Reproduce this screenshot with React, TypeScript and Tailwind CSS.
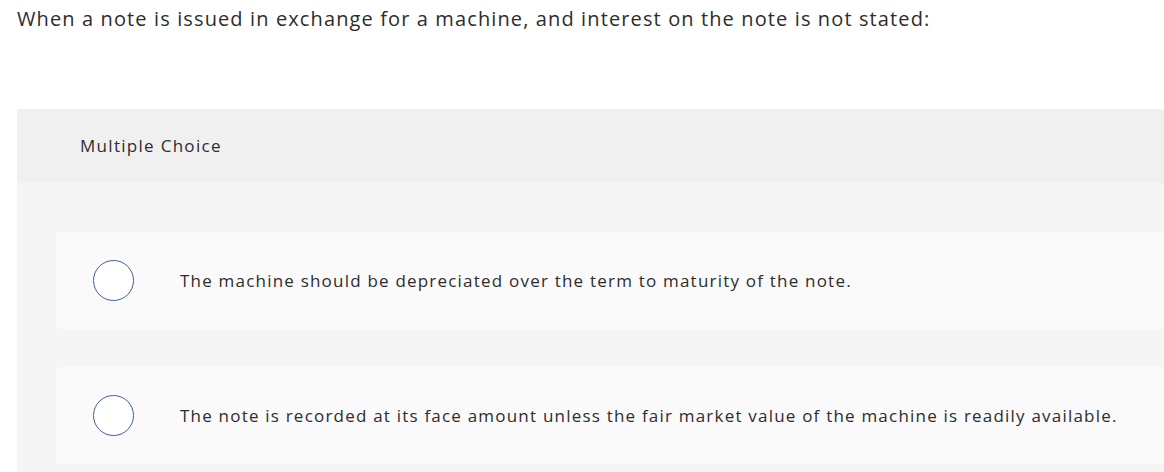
export default function App() {
  const options = [
    "The machine should be depreciated over the term to maturity of the note.",
    "The note is recorded at its face amount unless the fair market value of the machine is readily available.",
  ];

  return (
    <div className="w-[1164px] h-[472px] overflow-hidden bg-white text-[#333] font-['Open_Sans','Liberation_Sans',sans-serif]">
      <p className="pl-[17px] pt-[5px] text-[20px] leading-[28px] tracking-[0.056em] text-[#2d2d2d]">
        When a note is issued in exchange for a machine, and interest on the note is not stated:
      </p>
      <section className="ml-[17px] mt-[76px] rounded-tl-[3px] bg-[#f5f5f5]">
        <div className="h-[74px] flex items-center pl-[63px] bg-[#f0f0f0] rounded-tl-[3px] text-[17px] tracking-[0.076em] text-[#2d2d2d]">
          Multiple Choice
        </div>
        <div className="flex flex-col gap-[38px] pt-[49px] pb-[10px] pl-[39px]">
          {options.map((opt) => (
            <div
              key={opt}
              className="h-[97px] flex items-center bg-[#fafafa] rounded-l-[4px]"
            >
              <span className="ml-[37px] w-[41px] h-[41px] rounded-full border-[1.5px] border-[#3d5f94] bg-white shrink-0" />
              <span className="ml-[46px] text-[17px] tracking-[0.071em] text-[#2d2d2d]">{opt}</span>
            </div>
          ))}
        </div>
      </section>
    </div>
  );
}
